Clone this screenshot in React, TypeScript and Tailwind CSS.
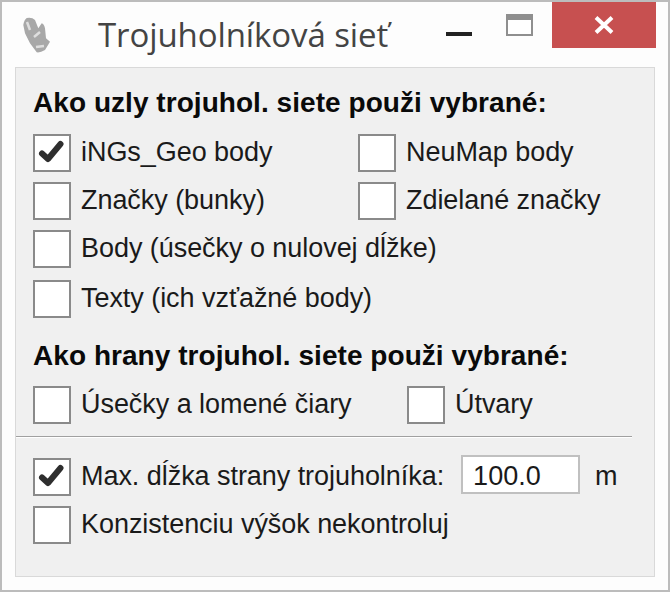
const font = "font-['Liberation_Sans',Arial,sans-serif]";

function Check({ checked = false }: { checked?: boolean }) {
  return (
    <span className="flex h-[38px] w-[38px] shrink-0 items-center justify-center border-2 border-[#8a8a8a] bg-white">
      {checked && (
        <svg width="32" height="28" viewBox="0 0 32 28" fill="none">
          <path d="M6 14.5 L12 20 L24.5 5" stroke="#2e2e2e" strokeWidth="6" strokeLinecap="round" strokeLinejoin="round" />
        </svg>
      )}
    </span>
  );
}

function Item({ label, checked, className = "" }: { label: string; checked?: boolean; className?: string }) {
  return (
    <div className={`flex items-center gap-[10px] ${className}`}>
      <Check checked={checked} />
      <span className="mb-[2px] whitespace-nowrap text-[27px] leading-[36px] tracking-[-0.05px] text-[#1a1a1a]">{label}</span>
    </div>
  );
}

export default function App() {
  return (
    <div className={`${font} flex h-[592px] w-[670px] flex-col border-2 border-[#bcbcbc] bg-[#fdfdfd]`}>
      <div className="flex h-[65px] shrink-0 items-start">
        <svg className="ml-[21px] mt-[15px] blur-[0.6px]" width="30" height="38" viewBox="23 17 30 38">
          <path d="M26.7 18 Q32 17 35 20 L38.3 28.3 L41.7 23.3 Q44 24 45 28.3 L46 38.3 L50 41.7 L45 50 Q40 53 36.7 52.3 L30 43.3 L25 33.3 L23.3 25 Q24 20 26.7 18 Z" fill="#a8a8a8" />
          <path d="M27 22 L30 30 M34 37 L40 32 M36 47 L44 46" stroke="#dedede" strokeWidth="2.5" fill="none" />
        </svg>
        <span className="ml-[45px] mt-[10px] whitespace-nowrap font-['Open_Sans',sans-serif] text-[33px] leading-[46px] tracking-[-0.1px] text-[#444444]">
          Trojuholníková sieť
        </span>
        <span className="ml-[58px] mt-[30px] h-[4px] w-[26px] bg-[#222222]" />
        <span className="ml-[34px] mt-[12px] h-[22px] w-[27px] border-2 border-t-[6px] border-[#8f8f8f] bg-white" />
        <span className="ml-[19px] flex h-[46px] w-[104px] items-center justify-center bg-[#c75050]">
          <svg width="20" height="18" viewBox="0 0 20 18">
            <path d="M2 1.5 L18 16.5 M18 1.5 L2 16.5" stroke="#ffffff" strokeWidth="4" />
          </svg>
        </span>
      </div>

      <div className="mx-[13px] flex h-[510px] flex-col border border-[#d9d9d9] bg-[#f0f0f0] pt-[16px]">
        <div className="px-[17px]">
          <p className="whitespace-nowrap text-[28px] font-bold leading-[38px] tracking-[0.05px] text-[#0a0a0a]">Ako uzly trojuhol. siete použi vybrané:</p>
          <div className="mt-[12px] flex flex-col">
            <div className="grid grid-cols-[325px_1fr]">
              <Item label="iNGs_Geo body" checked />
              <Item label="NeuMap body" />
            </div>
            <div className="mt-[10px] grid grid-cols-[325px_1fr]">
              <Item label="Značky (bunky)" />
              <Item label="Zdielané značky" />
            </div>
            <Item className="mt-[10px]" label="Body (úsečky o nulovej dĺžke)" />
            <Item className="mt-[12px]" label="Texty (ich vzťažné body)" />
          </div>
          <p className="mt-[19px] whitespace-nowrap text-[28px] font-bold leading-[38px] tracking-[0.05px] text-[#0a0a0a]">Ako hrany trojuhol. siete použi vybrané:</p>
          <div className="mt-[11px] grid grid-cols-[374px_1fr]">
            <Item label="Úsečky a lomené čiary" />
            <Item label="Útvary" />
          </div>
        </div>
        <div className="mt-[12px] mr-[22px] border-t border-b border-t-[#a0a0a0] border-b-white" />
        <div className="px-[17px]">
          <div className="mt-[20px] flex items-start">
            <Item label="Max. dĺžka strany trojuholníka:" checked />
            <span className="ml-[17px] -mt-[3px] flex h-[39px] w-[119px] items-center border-2 border-[#c0c0c0] bg-white pb-0 pl-[10px] pt-[3px] text-[27px] text-[#1a1a1a]">100.0</span>
            <span className="ml-[15px] text-[27px] leading-[36px] text-[#1a1a1a]">m</span>
          </div>
          <Item className="mt-[10px]" label="Konzistenciu výšok nekontroluj" />
        </div>
      </div>
    </div>
  );
}
